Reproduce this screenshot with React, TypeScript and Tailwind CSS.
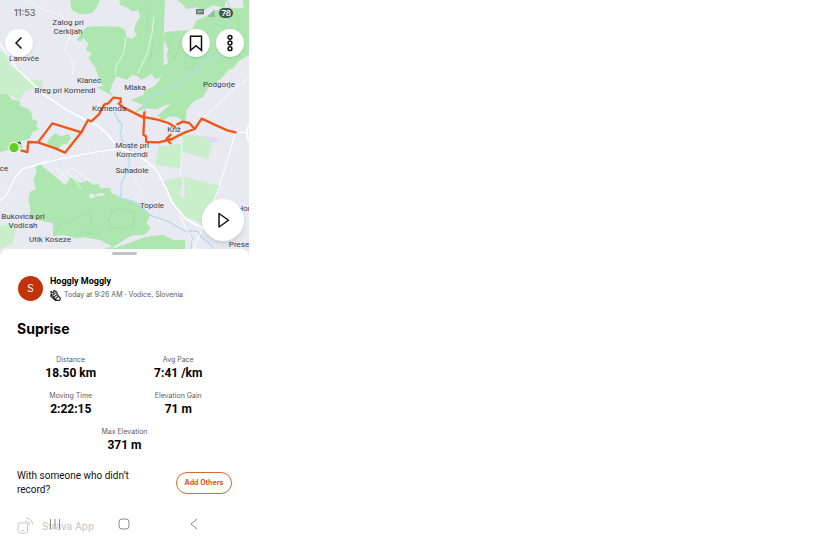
import React from 'react';

const PLACES = [
  { lines: ['Zalog pri', 'Cerkljah'], pos: 'left-[68px] top-[18px]' },
  { lines: ['Lanovče'], pos: 'left-[24px] top-[54px]' },
  { lines: ['Klanec'], pos: 'left-[89px] top-[76px]' },
  { lines: ['Breg pri Komendi'], pos: 'left-[65px] top-[86px]' },
  { lines: ['Mlaka'], pos: 'left-[135px] top-[83px]' },
  { lines: ['Podgorje'], pos: 'left-[219px] top-[80px]' },
  { lines: ['Komenda'], pos: 'left-[109px] top-[104px]' },
  { lines: ['Križ'], pos: 'left-[174px] top-[125px]' },
  { lines: ['Moste pri', 'Komendi'], pos: 'left-[132px] top-[141px]' },
  { lines: ['ce'], pos: 'left-[4px] top-[164px]' },
  { lines: ['Suhadole'], pos: 'left-[132px] top-[166px]' },
  { lines: ['Topole'], pos: 'left-[152px] top-[201px]' },
  { lines: ['Hor'], pos: 'left-[244px] top-[204px]' },
  { lines: ['Bukovica pri', 'Vodicah'], pos: 'left-[23px] top-[212px]' },
  { lines: ['Utik Koseze'], pos: 'left-[50px] top-[235px]' },
  { lines: ['Prese'], pos: 'left-[239px] top-[240px]' },
];

const STATS = [
  { label: 'Distance', value: '18.50 km' },
  { label: 'Avg Pace', value: '7:41 /km' },
  { label: 'Moving Time', value: '2:22:15' },
  { label: 'Elevation Gain', value: '71 m' },
  { label: 'Max Elevation', value: '371 m' },
];

const MapCanvas: React.FC = () => (
  <svg viewBox="0 0 747 780" preserveAspectRatio="xMinYMin slice" className="block h-[260px] w-full bg-[#e9e9f2]" aria-hidden="true">
    {/* Forests */}
    <g fill="#ade7af">
      <path d="M210 0L215 30 240 43 275 40 290 22 300 0z" />
      <path d="M258 82L280 79 360 80 375 90 380 112 397 116 410 105 402 90 408 70 420 50 415 30 395 34 380 22 360 15 358 0H495L492 80 490 200 480 215 482 232 465 238 455 222 425 240 412 228 395 225 380 240 350 228 335 255 330 275 340 290 315 275 290 262 310 258 300 245 292 220 285 200 265 175 275 160 258 150 265 130 250 115 240 125 230 120 240 104z" />
      <path d="M530 0H680L672 24 640 16 615 30 585 22 560 28 545 10z" />
      <path d="M495 96L535 92 575 90 590 60 615 50 635 40 670 20 705 25 747 25V165L735 172 715 185 700 205 685 210 665 235 628 258 610 290 596 298 580 305 560 330 556 367 530 350 505 350 485 365 475 345 515 310 490 318 470 328 435 325 420 332 400 338 430 315 390 300 430 285 435 270 465 258 485 230 465 205 480 200 505 190 500 165 506 150 490 120z" />
      <path d="M0 283l22-3 14 20 22 2 4 17 20 5 12 13 3 21 17 5-6 16 10 8-20 9-10 20-26 8 6 19-25 12-17-6-26 8z" />
      <path d="M140 440l5-20 17-18 6-2 14 10 23-8 8 12-11 17-17 3-10 14-16-7z" />
      <path d="M120 492L195 555 202 548 206 536 215 532 240 550 262 542 280 555 295 552 300 565 330 563 335 580 370 595 395 600 420 612 450 645 440 670 452 685 440 698 430 705 400 706 380 715 350 735 310 748V770H556L555 720 520 720 490 704 460 708 435 712 400 724 345 744 300 720 255 712 230 715 190 705 160 708 158 670 100 658 85 655 92 630 85 600 90 575 108 568 100 540 110 515 106 500z" />
      <path d="M728 0h19v35l-14-6z" />
    </g>
    <g fill="#c8eeca">
      <path d="M0 150L18 168 30 198 60 210 75 235 102 240 130 244 125 270 100 266 75 272 60 300 32 284 0 282z" />
      <path d="M474 440l70-8 5 8-7 65-75-10z" />
      <path d="M545 402l95 11-15 64-82-23z" />
      <path d="M484 545L540 532 552 530 660 558 625 668 600 668 545 645 520 610 500 572z" />
      <path d="M0 678l40-8 8 24-10 36-38 18z" />
    </g>
    <path d="M547 534l-3 32-8 10 10 18 8-2-2-60z" fill="#e9e9f2" />
    <path d="M606 408l40 4 16 11-24 5z" fill="#e1dcf1" />
    <path d="M266 585l10-6 6 6 22-7 8 3-2 6-24 2-4 5-12 1z" fill="#e9e9f2" />

    {/* Contour lines */}
    <g fill="none" stroke="#9dd8a3" strokeWidth="2">
      <path d="M440 18l4 24-6 50M460 130l-10 50M455 170l-8 14 6 18" />
      <path d="M515 100l-8 53 16 25 12-35 10-27 22-8 4 25-16 45 6 27 17-4 10-34 22-23 12-34M640 70l30 12 24-28M720 60l-10 40-20 30" />
      <path d="M325 660l12-30 26-4 42 10-8 43-32 8-34-4zM160 705l20-32 30-10 30-14 30-14 4 42 25 18-6 10-52-10" />
    </g>

    {/* Rivers */}
    <g fill="none" stroke="#b2dcef" strokeWidth="4" strokeLinejoin="round">
      <path d="M680 0l12 28-8 20 6 35-14 60-22 25-45 17-18 26-33 25-20 18-24 4-16 15-33 9-25 19-8 24 5 15-7 20" />
      <path d="M344 336l9 22 14 17-7 28 8 20-10 30M392 440l-6 30 3 22-14 36-10 18-4 48 15 6 16 2 28 16 35 30 24 7 28 10 35 22 20 9 15 17-5 45 8 25M548 692l45 2 12 18 25 20 12 16" />
    </g>

    {/* Roads */}
    <g fill="none" stroke="#fff" strokeLinejoin="round">
      <path d="M0 132l25 32 23 40 46 43 38 36 64 45 54 28 40 18 28 25 30 35 48 27 38 18 35 31 28 52 18 43 40 50 45 25 20 5" strokeWidth="5" />
      <path d="M0 602l20-18 26-53 22-24 60-18 90-20 80-15 62-7 50 15" strokeWidth="4" />
      <path d="M747 235l-45 31-74 71-28 23M747 399l-40-4-20 70-28 92-43 111-34 74-10 14M538 645l50 102" strokeWidth="3" />
      <path d="M80 0l48 28 55 17 20 28 6 36-14 40 28 44-6 30M462 50l-6 50-14 60-28 60M378 112l-8 50-22 36-2 28M545 380v70l-5 84M165 500l40 40M200 510l45 58M178 525l40-20 50 35M382 510l85-15M398 530l30 50" strokeWidth="2" />
    </g>
    <path d="M747 375c-8 8-8 38 0 46" fill="none" stroke="#fff" strokeWidth="5" />

    {/* Activity route */}
    <g fill="none" stroke="#ef5719" strokeWidth="7" strokeLinejoin="round" strokeLinecap="round">
      <path d="M65 452l17 4 3-30 29 1 43-57 87 27-49 61-29-13-52-18" />
      <path d="M244 397l20-37 10 4 23-21 16-30 12-3 15-17 22 2v12l-6 4 15 12 24 12 27 14 50 10 33 10 20 12" />
      <path d="M418 347l15 5-3 52 8 5 1 17 38 1 38-10 40-20 29-10 21-31 37 17 40 18 25 6M433 337l-2 18M584 387l-16-18-20-4-16 8" />
      <path d="M512 404l-13 13 12 13M499 417l18 1" />
    </g>
    <path d="M53 430l5-4 4 6" fill="none" stroke="#111" strokeWidth="3" />
    <circle cx="42" cy="443" r="17" fill="#fff" />
    <circle cx="42" cy="443" r="14" fill="#62cf22" />
  </svg>
);

const StatusBar: React.FC = () => (
  <div className="absolute inset-x-0 top-0 flex items-center justify-between pt-[7px] pr-4 pl-[14px] text-[#66676c]">
    <span className="text-[9px] leading-3 font-medium">11:53</span>
    <div className="flex items-center gap-1">
      <svg viewBox="0 0 24 24" className="h-2 w-2" aria-hidden="true">
        <path d="M0 0h24v16H0z" fill="#63766a" />
        <path d="M4 5h3v6H4M11 11V5h4v6M19 5v6M7 21h4M15 18v4" fill="none" stroke="#c5ebc8" strokeWidth="2" />
      </svg>
      <svg viewBox="0 0 20 20" className="h-[7px] w-[7px]" fill="#8fb497" aria-hidden="true">
        <path d="M0 14h4v6H0zM5 10h4v10H5zM10 5h4v15h-4zM15 0h4v20h-4z" />
      </svg>
      <span className="rounded-full bg-[#44574b] px-[2px] text-[8px] leading-[10px] font-semibold text-white">78</span>
    </div>
  </div>
);

const roundButton = 'flex h-7 w-7 items-center justify-center rounded-full bg-white shadow-sm';

export default function App() {
  return (
    <main className="min-h-screen bg-white font-['Inter','Liberation_Sans',sans-serif] text-[#111]">
      <div className="relative w-full max-w-[249px] overflow-hidden">
        {/* Map */}
        <section className="relative" aria-label="Activity map">
          <MapCanvas />
          {PLACES.map((place) => (
            <span key={place.lines[0]} className={`absolute -translate-x-1/2 text-center font-['Roboto',sans-serif] text-[8px] leading-[9px] whitespace-nowrap text-[#3c3c42] ${place.pos}`}>
              {place.lines.map((line) => (
                <span key={line} className="block">{line}</span>
              ))}
            </span>
          ))}

          <StatusBar />

          <div className="absolute inset-x-0 top-[29px] flex items-center gap-[6px] pr-[5px] pl-[5px]">
            <button type="button" aria-label="Back" className={`${roundButton} mr-auto`}>
              <svg viewBox="0 0 28 28" className="h-7 w-7" fill="none" stroke="#111" strokeWidth="1.5">
                <path d="M16.5 8.5L11 14l5.5 5.5" />
              </svg>
            </button>
            <button type="button" aria-label="Save route" className={roundButton}>
              <svg viewBox="0 0 28 28" className="h-7 w-7" fill="none" stroke="#111" strokeWidth="1.5">
                <path d="M8.5 7.3h11v14L14 16.7l-5.5 4.6z" />
              </svg>
            </button>
            <button type="button" aria-label="More options" className={roundButton}>
              <svg viewBox="0 0 28 28" className="h-7 w-7" fill="none" stroke="#111" strokeWidth="1.5">
                <circle cx="14" cy="8.3" r="1.9" />
                <circle cx="14" cy="14" r="1.9" />
                <circle cx="14" cy="19.7" r="1.9" />
              </svg>
            </button>
          </div>

          <button type="button" aria-label="Play flyover" className="absolute top-[199px] right-[5px] flex h-[42px] w-[42px] items-center justify-center rounded-full bg-white shadow-md">
            <svg viewBox="0 0 24 24" className="h-6 w-6" fill="none" stroke="#111" strokeWidth="1.5" strokeLinejoin="round">
              <path d="M8 5.5v13.5l9.5-6.75z" />
            </svg>
          </button>
        </section>

        {/* Activity sheet */}
        <section className="relative -mt-[11px] rounded-t-lg bg-white px-[17px] pt-[3px]">
          <div className="mx-auto h-[3px] w-[25px] rounded-full bg-[#c2c2c2]" />

          <div className="mt-5 flex items-center gap-[7px] pl-px">
            <div className="flex h-[25px] w-[25px] items-center justify-center rounded-full bg-[#c2330b] text-[10px] text-white">S</div>
            <div>
              <h2 className="font-['Roboto',sans-serif] text-[9px] leading-3 font-bold text-black">Hoggly Moggly</h2>
              <p className="mt-[2px] flex items-center gap-[3px] text-[7px] leading-3 text-[#5d5d60]">
                <svg viewBox="0 0 24 24" className="h-[11px] w-[11px]" fill="none" stroke="#222" strokeWidth="2.5" strokeLinejoin="round" aria-hidden="true">
                  <path d="M2 3l5 3 2-5 6 4 1 5 7 9-3 4-6-1L3 10zM2 10l0 4 10 9 8 0M6 11l6-5M9 15l6-5M13 18l5-4" />
                </svg>
                <span className="whitespace-nowrap">Today at 9:26 AM · Vodice, Slovenia</span>
              </p>
            </div>
          </div>

          <h1 className="mt-[18px] text-[14px] leading-5 font-bold text-black">Suprise</h1>

          <dl className="mt-[15px] flex flex-wrap justify-center gap-y-[10px]">
            {STATS.map((stat) => (
              <div key={stat.label} className="w-1/2 text-center">
                <dt className="text-[7px] leading-3 text-[#5d5d60]">{stat.label}</dt>
                <dd className="font-['Roboto',sans-serif] text-[12px] leading-[14px] font-bold text-black">{stat.value}</dd>
              </div>
            ))}
          </dl>

          <div className="mt-[17px] flex items-center justify-between gap-4">
            <p className="w-[120px] font-['Roboto',sans-serif] text-[10px] leading-[14px]">With someone who didn’t record?</p>
            <button type="button" className="h-[22px] w-14 shrink-0 rounded-full border border-[#d9682f] text-[7px] font-bold text-[#d4561b]">
              Add Others
            </button>
          </div>

          <div className="mt-5 flex items-center gap-2 text-[#c4c4c6]">
            <svg viewBox="0 0 34 34" className="h-[17px] w-[17px]" fill="none" stroke="currentColor" strokeWidth="2" aria-hidden="true">
              <rect x="2" y="12" width="19" height="20" rx="4" />
              <path d="M9 27h5M17 8c5 0 8 4 8 8M17 2c9 0 14 6 14 13" />
            </svg>
            <span className="text-[10px] leading-[14px]">Strava App</span>
          </div>
        </section>

        {/* System navigation */}
        <nav className="absolute inset-x-0 bottom-[3px] flex items-center justify-around px-5 text-[#8b8b8e]" aria-label="System navigation">
          <button type="button" aria-label="Recent apps">
            <svg viewBox="0 0 14 14" className="h-[14px] w-[14px]" fill="none" stroke="currentColor">
              <path d="M2.5 2v10M7 2v10M11.5 2v10" />
            </svg>
          </button>
          <button type="button" aria-label="Home">
            <svg viewBox="0 0 14 14" className="h-[14px] w-[14px]" fill="none" stroke="currentColor">
              <rect x="2" y="2" width="10" height="10" rx="3" />
            </svg>
          </button>
          <button type="button" aria-label="Go back">
            <svg viewBox="0 0 14 14" className="h-[14px] w-[14px]" fill="none" stroke="currentColor">
              <path d="M10 2L4 7l6 5" />
            </svg>
          </button>
        </nav>
      </div>
    </main>
  );
}
